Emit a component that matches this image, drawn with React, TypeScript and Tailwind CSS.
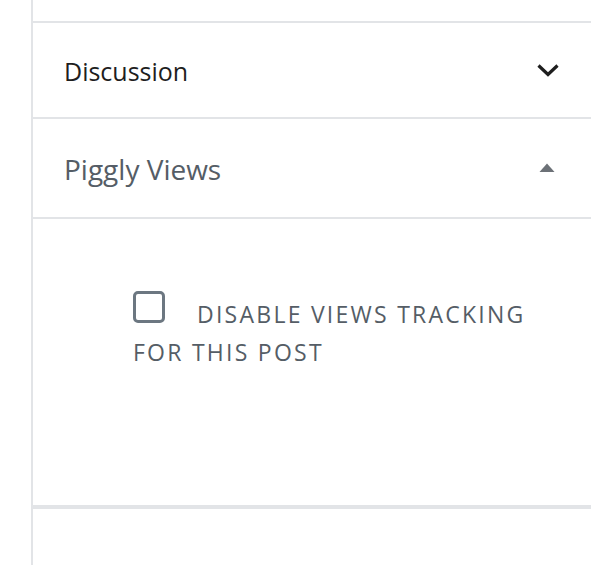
import React from "react";

export default function App() {
  return (
    <div className="w-[591px] h-[565px] bg-white flex overflow-hidden" style={{ fontFamily: '"Open Sans", "Noto Sans", sans-serif' }}>
      <div className="w-[31px] shrink-0" />
      <div className="flex-1 min-w-0 border-l-2 border-[#e2e4e7] flex flex-col">
        <div className="h-[21px] shrink-0" />
        <div className="h-[96px] shrink-0 border-t-2 border-[#e2e4e7] flex items-center justify-between pl-[31px] pr-[31px]">
          <span className="text-[25px] text-[#1e1e1e] leading-none pt-[3px]">Discussion</span>
          <svg width="24" height="24" viewBox="0 0 24 24" className="text-[#1e1e1e]">
            <path d="M2.5 7.5 L12 16.5 L21.5 7.5" fill="none" stroke="currentColor" strokeWidth="3.2" />
          </svg>
        </div>
        <div className="h-[100px] shrink-0 border-t-2 border-[#e2e4e7] flex items-center justify-between pl-[31px] pr-[32px]">
          <span className="text-[28px] text-[#555d66] leading-none pt-[1px]">Piggly Views</span>
          <svg width="24" height="24" viewBox="0 0 24 24" className="text-[#6c7177]">
            <path d="M4.5 16 L12 7.5 L19.5 16 Z" fill="currentColor" />
          </svg>
        </div>
        <div className="h-[288px] shrink-0 border-t-2 border-[#e2e4e7] pt-[72px] pl-[100px]">
          <p className="w-[410px] text-[23px] leading-[38px] tracking-[2.25px] uppercase text-[#555d66]">
            <span className="inline-block w-[32px] h-[32px] border-[3px] border-[#6c7781] rounded-[5px] mr-[32px] align-baseline" />
            Disable views tracking for this post
          </p>
        </div>
        <div className="flex-1 border-t-4 border-[#e2e4e7]" />
      </div>
    </div>
  );
}
